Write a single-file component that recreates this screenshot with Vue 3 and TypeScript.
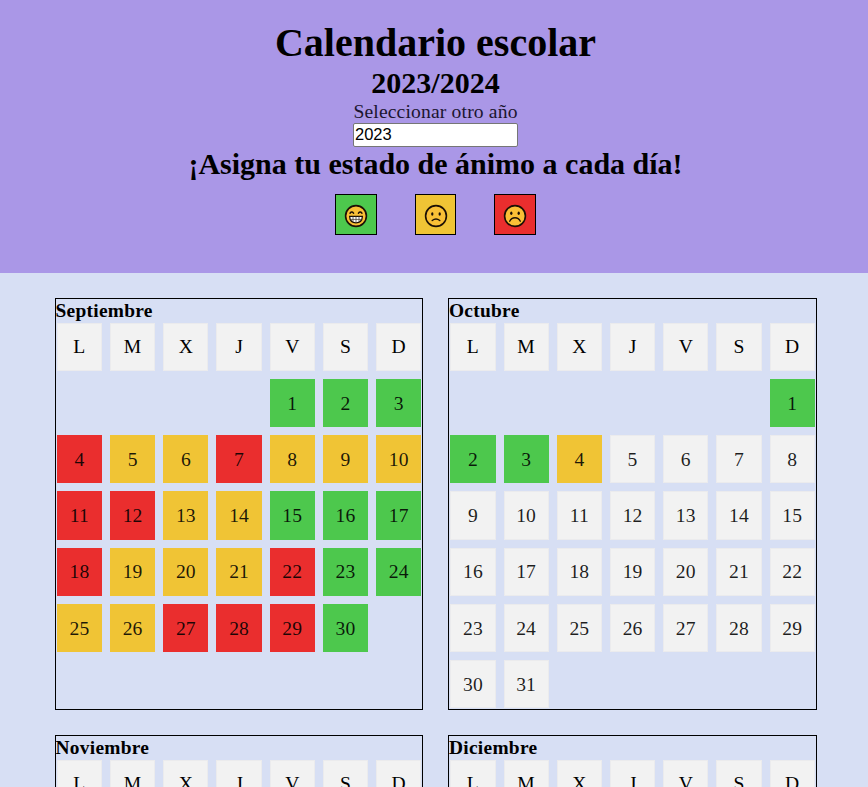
<script setup lang="ts">
import { ref } from 'vue'

type Mood = 'happy' | 'neutral' | 'sad' | ''

interface Month {
  name: string
  offset: number
  days: number
  moods: string
}

const year = ref('2023')
const weekdays = ['L', 'M', 'X', 'J', 'V', 'S', 'D']
const moodCodes: Record<string, Mood> = { g: 'happy', y: 'neutral', r: 'sad' }

const months: Month[] = [
  { name: 'Septiembre', offset: 4, days: 30, moods: 'gggryyryyyrryygggryyyrggyyrrrg' },
  { name: 'Octubre', offset: 6, days: 31, moods: 'gggy' },
  { name: 'Noviembre', offset: 2, days: 0, moods: '' },
  { name: 'Diciembre', offset: 4, days: 0, moods: '' },
]

function moodOf(month: Month, day: number): Mood {
  return moodCodes[month.moods[day - 1]] ?? ''
}
</script>

<template>
  <div class="page">
    <header class="header">
      <h1>Calendario escolar</h1>
      <h2>2023/2024</h2>
      <label for="year">Seleccionar otro año</label>
      <input id="year" v-model="year" type="text" />
      <h2>¡Asigna tu estado de ánimo a cada día!</h2>
      <div class="moods">
        <button class="mood happy" type="button">
          <svg viewBox="0 0 24 24">
            <circle class="face" cx="12" cy="12" r="10.4" />
            <path class="line" d="M6 9.2q1.8-2.3 3.6 0M14.4 9.2q1.8-2.3 3.6 0" />
            <path class="teeth" d="M5.6 12.4h12.8q-.3 6.4-6.4 6.4t-6.4-6.4z" />
            <path class="grid" d="M6.4 15.4h11.2M9 12.6v5.2M12 12.6v6M15 12.6v5.2" />
          </svg>
        </button>
        <button class="mood neutral" type="button">
          <svg viewBox="0 0 24 24">
            <circle class="face" cx="12" cy="12" r="10.4" />
            <ellipse class="eye" cx="8.3" cy="10" rx="1.15" ry="1.8" />
            <ellipse class="eye" cx="15.7" cy="10" rx="1.15" ry="1.8" />
            <path class="line" d="M8.2 16.5q3.8-2.9 7.6 0" />
          </svg>
        </button>
        <button class="mood sad" type="button">
          <svg viewBox="0 0 24 24">
            <circle class="face" cx="12" cy="12" r="10.4" />
            <ellipse class="eye" cx="8.3" cy="9.3" rx="1.15" ry="1.8" />
            <ellipse class="eye" cx="15.7" cy="9.3" rx="1.15" ry="1.8" />
            <path class="line" d="M6.7 17.2q1.6-3.4 5.3-3.4t5.3 3.4" />
          </svg>
        </button>
      </div>
    </header>

    <main class="months">
      <section v-for="month in months" :key="month.name" class="month">
        <h3>{{ month.name }}</h3>
        <div class="days">
          <div v-for="w in weekdays" :key="w" class="cell">{{ w }}</div>
          <div v-for="n in month.offset" :key="'b' + n"></div>
          <div v-for="d in month.days" :key="d" class="cell day" :class="moodOf(month, d)">{{ d }}</div>
        </div>
      </section>
    </main>
  </div>
</template>

<style>
html,
body {
  overflow: hidden;
  background: #d7dff4;
}
</style>

<style scoped>
.page {
  width: 871px;
  height: 787px;
  overflow: hidden;
  font-family: 'Liberation Serif', 'Times New Roman', serif;
  font-size: 20px;
  line-height: 23px;
  color: #000;
}
h1,
h2,
h3 {
  margin: 0;
}
.header {
  box-sizing: border-box;
  height: 273px;
  padding-top: 20px;
  display: flex;
  flex-direction: column;
  align-items: center;
  background: #aa97e7;
}
h1 {
  font-size: 40px;
  line-height: 46px;
}
h2 {
  font-size: 30px;
  line-height: 34px;
}
label {
  height: 23px;
  font-size: 19.6px;
  line-height: 24px;
  letter-spacing: 0.16px;
  color: #1b1530;
}
input {
  box-sizing: border-box;
  width: 165px;
  height: 24px;
  padding: 0 1px 1px;
  border: 1px solid #767676;
  border-radius: 2px;
  background: #fff;
  font: 16.5px 'Liberation Sans', Arial, sans-serif;
  color: #000;
}
.moods {
  display: flex;
  gap: 38px;
  margin-top: 13px;
}
.mood {
  display: flex;
  align-items: center;
  justify-content: center;
  box-sizing: border-box;
  width: 41.6px;
  height: 41px;
  padding: 2px 0 0;
  border: 1px solid #000;
}
.mood svg {
  width: 24px;
  height: 24px;
}
.face {
  fill: #fac036;
  stroke: #1c1005;
  stroke-width: 1.6;
}
.line {
  fill: none;
  stroke: #1c1005;
  stroke-width: 1.4;
  stroke-linecap: round;
}
.eye {
  fill: #1c1005;
}
.teeth {
  fill: #fff;
  stroke: #1c1005;
  stroke-width: 1.2;
}
.grid {
  fill: none;
  stroke: #4c4538;
  stroke-width: 0.8;
}
.months {
  display: grid;
  grid-template-columns: 368.5px 368.5px;
  gap: 25px;
  justify-content: center;
  padding-top: 25px;
}
.month {
  box-sizing: border-box;
  height: 412px;
  border: 1px solid #000;
}
h3 {
  height: 23.7px;
  font-size: 19.4px;
  line-height: 23.4px;
  letter-spacing: 0.28px;
}
.days {
  display: grid;
  grid-template-columns: repeat(7, 1fr);
  grid-auto-rows: 48.25px;
  gap: 8px;
  padding: 0 0.7px 0 1.3px;
}
.cell {
  box-sizing: border-box;
  display: flex;
  align-items: center;
  justify-content: center;
  border: 1px solid #ebebed;
  background: #f2f2f2;
  font-size: 19.6px;
  letter-spacing: 0.1px;
}
.day {
  color: rgba(0, 0, 0, 0.88);
}
.happy {
  background: #4dc84d;
}
.neutral {
  background: #f0c435;
}
.sad {
  background: #ea2e2e;
}
.day.happy {
  border-color: #4dc84d;
}
.day.neutral {
  border-color: #f0c435;
}
.day.sad {
  border-color: #ea2e2e;
}
</style>
